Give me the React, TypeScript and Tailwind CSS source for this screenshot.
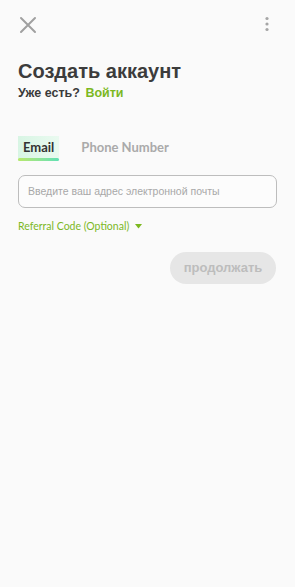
export default function App() {
  return (
    <div className="min-h-[587px] w-[295px] bg-[#fafafa] font-['Liberation_Sans','Roboto',sans-serif] text-[#3a3a3a]">
      <div className="flex h-[50px] items-center justify-between px-[18px]">
        <svg width="18" height="18" viewBox="0 0 18 18" className="ml-[1px] mt-[-1px]">
          <path d="M2 2 L16 16 M16 2 L2 16" stroke="#a0a0a0" strokeWidth="2" strokeLinecap="round" />
        </svg>
        <svg width="6" height="16" viewBox="0 0 6 16" className="mr-[7px] mt-[-2px]">
          <circle cx="3" cy="2.5" r="1.6" fill="#a6a6a6" />
          <circle cx="3" cy="8" r="1.6" fill="#a6a6a6" />
          <circle cx="3" cy="13.5" r="1.6" fill="#a6a6a6" />
        </svg>
      </div>
      <div className="px-[18px]">
        <h1 className="mt-[8px] text-[20px] font-bold leading-[26px] text-[#3c3c3c]">Создать аккаунт</h1>
        <p className="mt-[1px] text-[12.5px] font-bold leading-[16px] text-[#3a3a3a]">
          Уже есть? <span className="ml-[2px] text-[#7cb81f]">Войти</span>
        </p>

        <div className="mt-[35px] flex items-end gap-[22px] font-['Lato',sans-serif] text-[13px] font-bold leading-[16px]">
          <div className="relative bg-gradient-to-r from-[#d8f5e4] to-[#eafaf0] px-[5px] pb-[6px] pt-[3px] text-[#333]">
            Email
            <div className="absolute bottom-0 left-0 right-0 h-[3px] rounded-full bg-gradient-to-r from-[#b8e86a] to-[#5ee0b4]" />
          </div>
          <div className="pb-[6px] pt-[3px] text-[#aaaaaa]">Phone Number</div>
        </div>

        <div className="mt-[14px] flex h-[33px] w-[259px] items-center rounded-[7px] border border-[#bdbdbd] bg-[#fcfcfc] px-[9px]">
          <span className="text-[10.5px] text-[#a8a8a8]">Введите ваш адрес электронной почты</span>
        </div>

        <div className="mt-[11px] flex items-center gap-[6px] font-['Lato',sans-serif] text-[10.5px] leading-[14px] text-[#7cb81f]">
          Referral Code (Optional)
          <svg width="7" height="5" viewBox="0 0 7 5">
            <path d="M0 0 L7 0 L3.5 4.5 Z" fill="#7cb81f" />
          </svg>
        </div>

        <div className="mt-[19px] flex justify-end">
          <button className="mr-[1px] h-[32px] w-[106px] rounded-full bg-[#e6e6e6] text-[13px] font-bold text-[#bdbdbd]">
            продолжать
          </button>
        </div>
      </div>
    </div>
  );
}
